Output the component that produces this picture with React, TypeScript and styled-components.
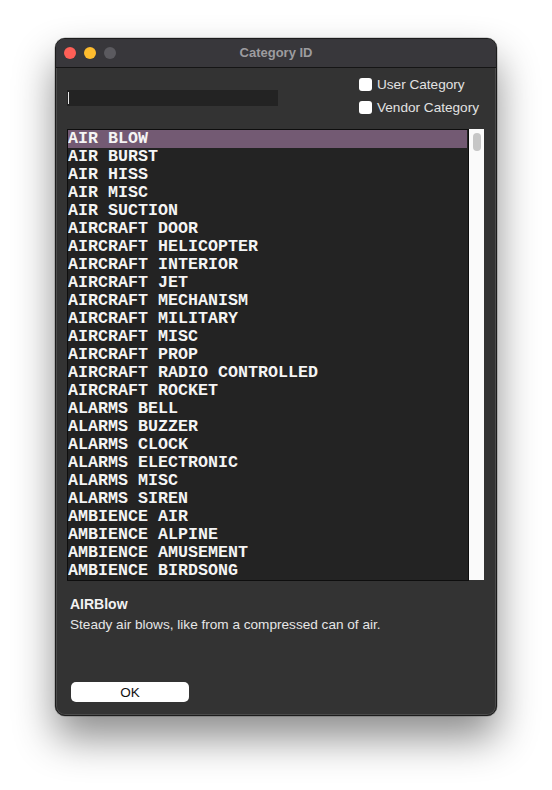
import React from "react";
import styled, { createGlobalStyle } from "styled-components";

const Global = createGlobalStyle`
  html, body { margin: 0; padding: 0; background: #ffffff; }
  body { font-family: "Liberation Sans", Arial, sans-serif; }
`;

const Page = styled.div`
  width: 552px;
  height: 790px;
  padding: 38px 0 0 55px;
  box-sizing: border-box;
  background: #fff;
`;

const Window = styled.div`
  width: 442px;
  height: 678px;
  box-sizing: border-box;
  border: 1px solid #1c1c1c;
  border-radius: 10px;
  background: #333333;
  overflow: hidden;
  display: flex;
  flex-direction: column;
  box-shadow: 0 22px 40px rgba(0, 0, 0, 0.45), 0 0 0 0.5px rgba(0,0,0,0.3), inset 0 0 0 1px rgba(255,255,255,0.12);
`;

const TitleBar = styled.div`
  height: 28px;
  flex: none;
  background: #38373b;
  border-bottom: 1px solid #151515;
  display: flex;
  align-items: center;
  position: relative;
  padding-left: 8px;
  gap: 8px;
`;

const Light = styled.span<{ $c: string }>`
  width: 12px;
  height: 12px;
  border-radius: 50%;
  background: ${(p) => p.$c};
`;

const Title = styled.div`
  position: absolute;
  left: 0;
  right: 0;
  top: 0;
  bottom: 2px;
  display: flex;
  align-items: center;
  justify-content: center;
  font-weight: bold;
  font-size: 13px;
  color: #9d9c9f;
  pointer-events: none;
`;

const Content = styled.div`
  flex: 1;
  display: flex;
  flex-direction: column;
  padding: 0 11px 0 11px;
`;

const TopRow = styled.div`
  height: 61px;
  display: flex;
  justify-content: space-between;
`;

const Field = styled.div`
  margin-top: 22px;
  width: 211px;
  height: 16px;
  background: #232323;
  position: relative;
  &::before {
    content: "";
    position: absolute;
    left: 1px;
    top: 2px;
    width: 1px;
    height: 12px;
    background: #e8e8e8;
  }
`;

const Checks = styled.div`
  margin-top: 9px;
  display: flex;
  flex-direction: column;
  gap: 9px;
  margin-right: 6px;
`;

const CheckRow = styled.label`
  display: flex;
  align-items: center;
  gap: 5px;
  font-size: 13.6px;
  color: #e2e2e2;
  height: 14px;
`;

const Box = styled.span`
  width: 13px;
  height: 13px;
  border-radius: 3px;
  background: #ffffff;
`;

const ListWrap = styled.div`
  display: flex;
  height: 452px;
`;

const List = styled.div`
  width: 402px;
  box-sizing: border-box;
  border: 1px solid #0e0e0e;
  background: #232323;
  overflow: hidden;
`;

const Row = styled.div<{ $sel?: boolean }>`
  height: 18px;
  line-height: 17px;
  background: ${(p) => (p.$sel ? "#735a73" : "transparent")};
  margin-right: ${(p) => (p.$sel ? "1px" : "0")};
  color: #f4f4f4;
  font-family: "Liberation Mono", "Courier New", monospace;
  font-weight: bold;
  font-size: 16.67px;
  white-space: pre;
`;

const Scroll = styled.div`
  width: 15px;
  background: #fafafa;
  display: flex;
  justify-content: center;
  padding-top: 4px;
  box-sizing: border-box;
  height: 451px;
`;

const Thumb = styled.div`
  width: 8px;
  height: 18px;
  border-radius: 4px;
  background: #c6c6c6;
`;

const DescTitle = styled.div`
  margin-top: 15px;
  padding-left: 3px;
  font-weight: bold;
  font-size: 14px;
  color: #f2f2f2;
`;

const DescText = styled.div`
  margin-top: 5px;
  padding-left: 3px;
  font-size: 13.6px;
  color: #e6e6e6;
`;

const OkButton = styled.button`
  margin-top: 50px;
  margin-left: 4px;
  width: 118px;
  height: 20px;
  border: none;
  border-radius: 5px;
  background: #ffffff;
  color: #111;
  font-family: "Liberation Sans", Arial, sans-serif;
  font-size: 13.5px;
  padding: 0;
`;

const items = [
  "AIR BLOW",
  "AIR BURST",
  "AIR HISS",
  "AIR MISC",
  "AIR SUCTION",
  "AIRCRAFT DOOR",
  "AIRCRAFT HELICOPTER",
  "AIRCRAFT INTERIOR",
  "AIRCRAFT JET",
  "AIRCRAFT MECHANISM",
  "AIRCRAFT MILITARY",
  "AIRCRAFT MISC",
  "AIRCRAFT PROP",
  "AIRCRAFT RADIO CONTROLLED",
  "AIRCRAFT ROCKET",
  "ALARMS BELL",
  "ALARMS BUZZER",
  "ALARMS CLOCK",
  "ALARMS ELECTRONIC",
  "ALARMS MISC",
  "ALARMS SIREN",
  "AMBIENCE AIR",
  "AMBIENCE ALPINE",
  "AMBIENCE AMUSEMENT",
  "AMBIENCE BIRDSONG",
];

export default function App() {
  return (
    <Page>
      <Global />
      <Window>
        <TitleBar>
          <Light $c="#fe5f57" />
          <Light $c="#febc2e" />
          <Light $c="#5b5a5f" />
          <Title>Category ID</Title>
        </TitleBar>
        <Content>
          <TopRow>
            <Field />
            <Checks>
              <CheckRow>
                <Box />
                User Category
              </CheckRow>
              <CheckRow>
                <Box />
                Vendor Category
              </CheckRow>
            </Checks>
          </TopRow>
          <ListWrap>
            <List>
              {items.map((it, i) => (
                <Row key={it} $sel={i === 0}>
                  {it}
                </Row>
              ))}
            </List>
            <Scroll>
              <Thumb />
            </Scroll>
          </ListWrap>
          <DescTitle>AIRBlow</DescTitle>
          <DescText>Steady air blows, like from a compressed can of air.</DescText>
          <OkButton>OK</OkButton>
        </Content>
      </Window>
    </Page>
  );
}
